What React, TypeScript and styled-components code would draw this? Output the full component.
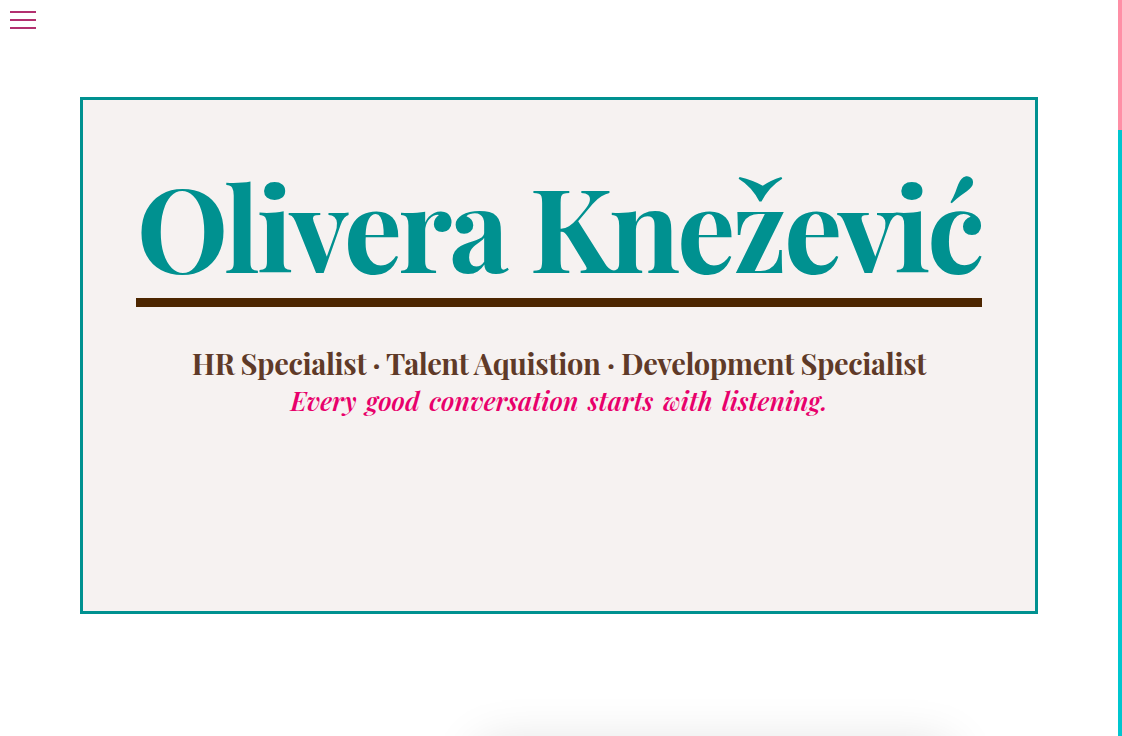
import React from "react";
import styled, { createGlobalStyle } from "styled-components";

const Global = createGlobalStyle`
  html, body { margin: 0; padding: 0; background: #ffffff; }
  body { font-family: "Playfair Display", "Liberation Serif", serif; }
  html { scrollbar-width: none; }
  ::-webkit-scrollbar { display: none; }
`;

const Page = styled.div`
  display: grid;
  grid-template-columns: 1fr 4px;
  min-height: 100vh;
`;

const Main = styled.main`
  min-width: 0;
`;

const Rail = styled.div`
  position: sticky;
  top: 0;
  height: 100vh;
  display: flex;
  flex-direction: column;
  background: #00c6cf;
`;

const Thumb = styled.div`
  height: 130px;
  background: #ff8fa6;
`;

const Nav = styled.nav`
  position: fixed;
  top: 0;
  left: 0;
  z-index: 10;
  padding: 11px 10px;
`;

const Burger = styled.button`
  display: flex;
  flex-direction: column;
  gap: 6px;
  width: 26px;
  padding: 0;
  border: 0;
  background: transparent;
  cursor: pointer;
`;

const BurgerLine = styled.span`
  display: block;
  height: 2px;
  width: 26px;
  background: #b3306f;
`;

const Hero = styled.section`
  padding-top: 97px;
  height: 648px;
  box-sizing: border-box;
`;

const Frame = styled.div`
  box-sizing: border-box;
  width: 958px;
  height: 517px;
  margin: 0 auto;
  border: 3px solid #009190;
  background: #f6f2f1;
  display: flex;
  flex-direction: column;
  align-items: center;
  padding-top: 67px;
`;

const Title = styled.h1`
  display: inline-block;
  margin: 0;
  font-family: "Playfair Display", "Liberation Serif", serif;
  font-weight: 700;
  font-size: 116px;
  line-height: 116px;
  letter-spacing: -3.2px;
  color: #009190;
  border-bottom: 9px solid #4d2600;
  padding: 0 0 15px 0;
`;

const Subtitle = styled.p`
  margin: 39px 0 0;
  font-family: "Playfair Display", "Liberation Serif", serif;
  font-weight: 700;
  font-size: 29px;
  line-height: 34px;
  color: #5f3a28;
  letter-spacing: -0.35px;
`;

const Tagline = styled.p`
  margin: 4px 0 0;
  font-family: "Playfair Display", "Liberation Serif", serif;
  font-style: italic;
  font-weight: 600;
  font-size: 26px;
  line-height: 34px;
  word-spacing: 3px;
  color: #e8006b;
`;

const About = styled.section`
  display: grid;
  grid-template-columns: 1fr 470px;
  width: 958px;
  margin: 0 auto;
  padding: 98px 88px 0 0;
  box-sizing: border-box;
  height: 1400px;
`;

const Card = styled.div`
  grid-column: 2;
  height: 560px;
  background: #ffffff;
  box-shadow: 0 0 48px rgba(0, 0, 0, 0.14);
`;

export default function App() {
  return (
    <>
      <Global />
      <Nav>
        <Burger aria-label="Menu">
          <BurgerLine />
          <BurgerLine />
          <BurgerLine />
        </Burger>
      </Nav>
      <Page>
        <Main>
          <Hero>
            <Frame>
              <Title>Olivera Knežević</Title>
              <Subtitle>HR Specialist · Talent Aquistion · Development Specialist</Subtitle>
              <Tagline>Every good conversation starts with listening.</Tagline>
            </Frame>
          </Hero>
          <About>
            <Card />
          </About>
        </Main>
        <Rail>
          <Thumb />
        </Rail>
      </Page>
    </>
  );
}
